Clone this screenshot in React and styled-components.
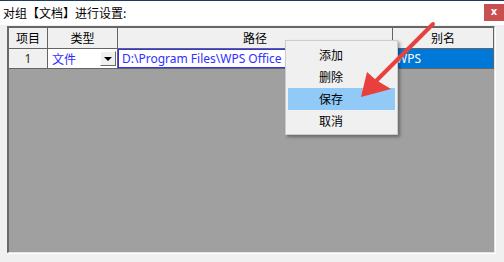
import React from "react";
import styled, { createGlobalStyle } from "styled-components";

const GlobalStyle = createGlobalStyle`
  html, body { margin: 0; padding: 0; background: #f0f0f0; }
  body {
    font-family: "Noto Sans", "Noto Sans CJK SC", sans-serif;
    font-size: 12px;
    color: #000;
  }
`;

const Window = styled.div`
  position: relative;
  width: 504px;
  height: 262px;
  box-sizing: border-box;
  border-top: 1px solid #1e3a5c;
  background: #f0f0f0;
  overflow: hidden;
  display: flex;
  flex-direction: column;
`;

const TitleBar = styled.div`
  height: 24px;
  background: #fff;
  display: flex;
  align-items: flex-start;
  justify-content: space-between;
  padding-left: 3px;
`;

const Title = styled.div`
  font-family: "Noto Sans CJK SC", sans-serif;
  font-size: 12px;
  line-height: 24px;
  color: #000;
`;

const CloseButton = styled.div`
  margin-top: 3px;
  width: 20px;
  height: 17px;
  background: #c85050;
  color: #fff;
  font-family: "DejaVu Sans", sans-serif;
  font-weight: bold;
  font-size: 10px;
  line-height: 16px;
  text-align: center;
`;

const Body = styled.div`
  padding: 1px 9px 9px 7px;
  flex: 1;
  display: flex;
`;

const GridFrame = styled.div`
  flex: 1;
  background: #a0a0a0;
  border-top: 1px solid #696969;
  border-left: 2px solid #696969;
  border-right: 1px solid #e3e3e3;
  border-bottom: 1px solid #e3e3e3;
  box-shadow: 1px 1px 0 #ffffff;
  align-self: stretch;
`;

const Table = styled.div`
  display: grid;
  grid-template-columns: 39px 70px 275px 1fr;
  grid-auto-rows: auto;
`;

const HeadCell = styled.div`
  height: 20px;
  box-sizing: content-box;
  background: #f0f0f0;
  border-right: 1px solid #646464;
  border-bottom: 1px solid #646464;
  border-top: 1px solid #646464;
  font-family: "Noto Sans CJK SC", sans-serif;
  font-size: 12px;
  line-height: 20px;
  text-align: center;
  color: #000;
`;

const Cell = styled.div`
  position: relative;
  height: 19px;
  box-sizing: content-box;
  background: ${(p) => p.$bg || "#fff"};
  color: ${(p) => p.$color || "#000"};
  border-right: 1px solid #646464;
  border-bottom: 1px solid #646464;
  display: flex;
  align-items: center;
  justify-content: ${(p) => (p.$center ? "center" : "flex-start")};
  padding-left: ${(p) => p.$pad || 0}px;
  font-size: 12px;
  line-height: 19px;
  overflow: hidden;
  white-space: nowrap;
`;

const TypeText = styled.span`
  font-family: "Noto Sans CJK SC", sans-serif;
  color: #2b2bff;
  flex: 1;
`;

const DropButton = styled.div`
  width: 16px;
  height: 15px;
  margin-right: 1px;
  box-sizing: border-box;
  background: #f0f0f0;
  border-top: 1px solid #fff;
  border-left: 1px solid #fff;
  border-right: 1px solid #696969;
  border-bottom: 1px solid #696969;
  display: flex;
  align-items: center;
  justify-content: center;
`;

const Triangle = styled.div`
  width: 0;
  height: 0;
  border-left: 4px solid transparent;
  border-right: 4px solid transparent;
  border-top: 4px solid #000;
`;

const EditBox = styled.div`
  flex: 1;
  align-self: stretch;
  border: 1px solid #3030ff;
  color: #3030ff;
  font-family: "Noto Sans", sans-serif;
  font-size: 12px;
  line-height: 17px;
  padding-left: 3px;
  white-space: nowrap;
  overflow: hidden;
`;

const Menu = styled.div`
  position: absolute;
  left: 285px;
  top: 39px;
  width: 113px;
  box-sizing: border-box;
  padding: 3px 2px 2px 2px;
  background: #f0f0f0;
  border: 1px solid #cccccc;
  box-shadow: 2px 2px 3px rgba(0, 0, 0, 0.35);
  display: flex;
  flex-direction: column;
`;

const MenuItem = styled.div`
  height: 22px;
  line-height: 22px;
  padding-left: 31px;
  font-family: "Noto Sans CJK SC", sans-serif;
  font-size: 12px;
  color: #000;
  background: ${(p) => (p.$active ? "#91c9f7" : "transparent")};
`;

const ArrowLayer = styled.svg`
  position: absolute;
  left: 0;
  top: 0;
  pointer-events: none;
`;

export default function App() {
  return (
    <>
      <GlobalStyle />
      <Window>
        <TitleBar>
          <Title>对组【文档】进行设置:</Title>
          <CloseButton>x</CloseButton>
        </TitleBar>
        <Body>
          <GridFrame>
            <Table>
              <HeadCell>项目</HeadCell>
              <HeadCell>类型</HeadCell>
              <HeadCell>路径</HeadCell>
              <HeadCell>别名</HeadCell>
              <Cell $bg="#f0f0f0" $center $color="#3a2a10">1</Cell>
              <Cell $pad={4}>
                <TypeText>文件</TypeText>
                <DropButton>
                  <Triangle />
                </DropButton>
              </Cell>
              <Cell>
                <EditBox>D:\Program Files\WPS Office</EditBox>
              </Cell>
              <Cell $bg="#0078d7" $color="#fff" $pad={3}>WPS</Cell>
            </Table>
          </GridFrame>
        </Body>
        <Menu>
          <MenuItem>添加</MenuItem>
          <MenuItem>删除</MenuItem>
          <MenuItem $active>保存</MenuItem>
          <MenuItem>取消</MenuItem>
        </Menu>
        <ArrowLayer width="504" height="262" viewBox="0 0 504 262">
          <line x1="433" y1="23" x2="376" y2="80" stroke="#e8403c" strokeWidth="4" strokeLinecap="round" />
          <polygon points="361,96 367,71 376,79 391,88" fill="#e8403c" />
        </ArrowLayer>
      </Window>
    </>
  );
}
